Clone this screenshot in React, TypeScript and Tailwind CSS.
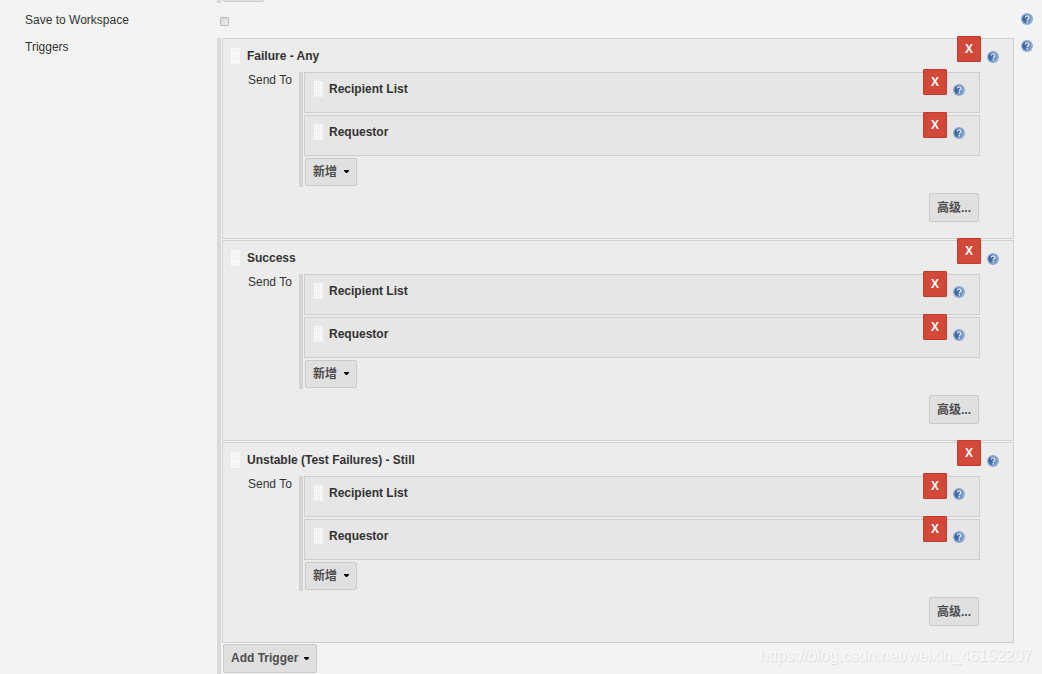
import React from "react";

const TRIGGERS = ["Failure - Any", "Success", "Unstable (Test Failures) - Still"];
const RECIPIENTS = ["Recipient List", "Requestor"];

function HelpLink({ topic }: { topic: string }) {
  return (
    <a href="#help" aria-label={`Help for ${topic}`} className="block size-3 shrink-0">
      <svg viewBox="0 0 12 12" className="block size-3" aria-hidden="true">
        <defs>
          <linearGradient id="helpFill" x1="0" x2="1" y1="0.3" y2="0.7">
            <stop offset="0" stopColor="#2a5090" />
            <stop offset="0.4" stopColor="#4a70ab" />
            <stop offset="1" stopColor="#86a8d4" />
          </linearGradient>
        </defs>
        <circle cx="6" cy="6" r="6" fill="#8fa9cd" />
        <circle cx="6" cy="6" r="5.1" fill="#9db8dc" />
        <circle cx="6" cy="6" r="4.6" fill="url(#helpFill)" />
        <path d="M4.2 4.5C4.3 2.3 8 2.3 8 4.5C8 5.8 6.3 5.7 6.3 7.3" fill="none" stroke="#e9f0f9" strokeWidth="1.3" />
        <rect x="5.6" y="8.1" width="1.4" height="1.4" fill="#e9f0f9" />
      </svg>
    </a>
  );
}

function DragHandle() {
  return (
    <span className="block h-4 w-[9px] shrink-0 cursor-move bg-[linear-gradient(to_right,#fafafa_1px,transparent_1px),linear-gradient(to_bottom,#fafafa_1px,transparent_1px)] bg-size-[2px_2px]" />
  );
}

function DeleteButton() {
  return (
    <button
      type="button"
      className="h-[26px] w-6 shrink-0 rounded-[1px] border border-[#c23b2c] bg-[#d24939] pb-px text-xs leading-5 font-bold text-white"
    >
      X
    </button>
  );
}

function ItemActions({ name }: { name: string }) {
  return (
    <div className="flex items-start gap-[6px]">
      <DeleteButton />
      <div className="pt-[15px]">
        <HelpLink topic={name} />
      </div>
    </div>
  );
}

function Caret() {
  return (
    <svg viewBox="0 0 5 3" className="h-[3px] w-[5px]" aria-hidden="true">
      <path d="M0 0h5v1L3 3H2L0 1z" fill="#000" />
    </svg>
  );
}

const buttonClass =
  "flex items-center rounded-xs border border-[#cacaca] bg-[#e0e0e0] px-[7px] text-xs font-bold text-[#4d4d4d]";

function Recipient({ name }: { name: string }) {
  return (
    <div className="flex h-[41px] items-start border border-[#cdcdcd] bg-[#e6e6e6] pr-[14px] pl-[9px]">
      <div className="flex flex-1 items-start pt-2">
        <DragHandle />
        <b className="ml-[6px] leading-4">{name}</b>
      </div>
      <div className="-mt-1">
        <ItemActions name={name} />
      </div>
    </div>
  );
}

function Trigger({ name }: { name: string }) {
  return (
    <section className="border border-[#d0d0d0] bg-[#ececec] pb-4 pl-[8px]">
      <header className="flex h-[33px] items-start pr-[14px]">
        <div className="flex flex-1 items-start pt-[9px]">
          <DragHandle />
          <b className="ml-[7px] leading-4">{name}</b>
        </div>
        <div className="-mt-[3px]">
          <ItemActions name={name} />
        </div>
      </header>
      <div className="flex items-start pr-[33px] pl-[17px]">
        <span className="w-[51px] shrink-0 leading-4">Send To</span>
        <div className="flex flex-1 flex-col gap-[2px] border-l-4 border-[#d3d3d3] pb-px pl-px">
          {RECIPIENTS.map((r) => (
            <Recipient key={r} name={r} />
          ))}
          <div className="flex pl-px">
            <button type="button" className={`${buttonClass} h-7 gap-[7px] pb-px`}>
              <span>新增</span>
              <Caret />
            </button>
          </div>
        </div>
      </div>
      <div className="mt-[6px] flex justify-end pr-[34px]">
        <button type="button" className={`${buttonClass} h-[29px]`}>
          高级...
        </button>
      </div>
    </section>
  );
}

export default function App() {
  return (
    <main className="relative h-screen overflow-hidden bg-[#f3f3f3] font-['Liberation_Sans','Noto_Sans_CJK_SC',sans-serif] text-xs text-[#333]">
      <div className="flex h-[3px] overflow-hidden pl-[217px]">
        <div className="flex items-end border-l-4 border-[#d9d9d9] pb-px pl-[2px]">
          <div className="h-5 w-[41px] shrink-0 rounded-xs border border-[#cacaca] bg-[#e0e0e0]" />
        </div>
      </div>

      <div className="flex h-[35px] items-start pt-[9px] pr-[9px] pl-[25px]">
        <label htmlFor="save" className="w-[195px] leading-4">
          Save to Workspace
        </label>
        <div className="flex-1 pt-[5px]">
          <input
            id="save"
            type="checkbox"
            className="block size-[9px] appearance-none rounded-[1px] border border-[#bcbcbc] bg-linear-to-br from-[#d6d6d6] to-[#eeeeee]"
          />
        </div>
        <div className="pt-px">
          <HelpLink topic="Save to Workspace" />
        </div>
      </div>

      <div className="flex items-start pr-[9px] pl-[25px]">
        <h2 className="w-48 shrink-0 pt-px leading-4">Triggers</h2>
        <div className="flex flex-1 flex-col gap-px border-l-4 border-[#d9d9d9] pb-4 pl-px">
          {TRIGGERS.map((t) => (
            <Trigger key={t} name={t} />
          ))}
          <div className="flex pl-px">
            <button type="button" className={`${buttonClass} h-[29px] gap-[6px] pb-px`}>
              <span>Add Trigger</span>
              <Caret />
            </button>
          </div>
        </div>
        <div className="pt-[2px] pl-[7px]">
          <HelpLink topic="Triggers" />
        </div>
      </div>

      <span className="pointer-events-none absolute right-[10px] bottom-2 text-base leading-5 text-[#f9f9f9] [text-shadow:1px_1px_1px_#dadada]">
        https://blog.csdn.net/weixin_46152207
      </span>
    </main>
  );
}
